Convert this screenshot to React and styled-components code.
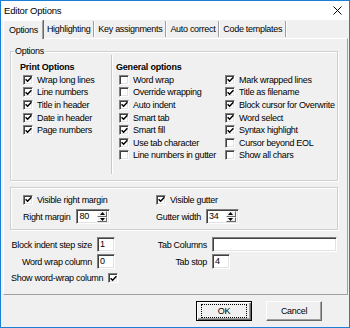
import React from 'react';
import styled, { createGlobalStyle, css } from 'styled-components';

const Global = createGlobalStyle`
  html, body { margin: 0; padding: 0; background: #fff; }
  body {
    font-family: "Liberation Sans", Arial, sans-serif;
    font-size: 9px;
    letter-spacing: -0.3px;
    color: #000;
  }
  * { box-sizing: border-box; }
`;

const Window = styled.div`
  width: 350px;
  height: 328px;
  border: 1px solid #1a7fd6;
  display: flex;
  flex-direction: column;
  background: #f0f0f0;
  overflow: hidden;
`;

const TitleBar = styled.div`
  height: 19px;
  flex: none;
  background: #fff;
  display: flex;
  align-items: center;
  justify-content: space-between;
  padding: 0 7px 0 3px;
  font-size: 9.5px;
  letter-spacing: -0.2px;
`;

const Body = styled.div`
  flex: 1;
  display: flex;
  flex-direction: column;
  padding: 0 1px 0 2px;
`;

const TabStrip = styled.div`
  height: 18px;
  display: flex;
  align-items: flex-end;
`;

const Tab = styled.div`
  position: relative;
  display: flex;
  align-items: center;
  ${p => p.$active ? css`
    height: 19px;
    margin-bottom: -1px;
    z-index: 1;
    padding: 0 4px 0 5px;
    background: #f0f0f0;
    border-left: 1px solid #fff;
    border-top: 1px solid #fff;
    border-right: 1px solid #a0a0a0;
    box-shadow: 1px 0 0 #696969;
    margin-right: 1px;
  ` : css`
    height: 16px;
    margin-bottom: 1px;
    padding: 0 3px 0 3px;
    border-right: 1px solid #a0a0a0;
    box-shadow: 1px 0 0 #fff;
    margin-right: 1px;
  `}
`;

const Panel = styled.div`
  height: 257px;
  flex: none;
  border: 1px solid;
  border-color: #fff #a0a0a0 #a0a0a0 #fff;
  padding: 12px 0 0 6px;
  display: flex;
  flex-direction: column;
`;

const Group = styled.div`
  position: relative;
  width: 328px;
  height: ${p => p.$h}px;
  margin-top: ${p => p.$mt || 0}px;
  border: 1px solid #d0d0d0;
  box-shadow: inset 1px 1px 0 #fff, 1px 1px 0 #fff;
  flex: none;
`;

const Legend = styled.span`
  position: absolute;
  top: -6px;
  left: 3px;
  padding: 0 1px;
  line-height: 11px;
  background: #f0f0f0;
`;

const OptionsInner = styled.div`
  display: flex;
  height: 100%;
`;

const PrintCol = styled.div`
  width: 100px;
  padding: 10px 0 0 9px;
`;

const Divider = styled.div`
  width: 2px;
  margin: 3px 0 6px;
  border-left: 1px solid #c8c8c8;
  border-right: 1px solid #fff;
`;

const GeneralCol = styled.div`
  flex: 1;
  padding: 10px 0 0 3px;
`;

const Heading = styled.div`
  font-weight: bold;
  height: 11.5px;
  line-height: 11.5px;
  letter-spacing: -0.2px;
`;

const CheckList = styled.div`
  display: grid;
  grid-template-columns: ${p => p.$cols || '1fr'};
  grid-auto-flow: column;
  grid-template-rows: repeat(${p => p.$rows}, 12.6px);
  padding-left: ${p => p.$indent}px;
`;

const CheckRow = styled.label`
  display: flex;
  align-items: center;
  gap: 4px;
  white-space: nowrap;
  height: ${p => p.$h || 12.6}px;
`;

const Box = styled.span`
  width: 10px;
  height: 10px;
  flex: none;
  background: #fff;
  border: 1px solid;
  border-color: #808080 #fff #fff #808080;
  box-shadow: inset 1px 1px 0 #404040, inset -1px -1px 0 #e3e3e3;
  display: flex;
  align-items: center;
  justify-content: center;
`;

const Check = ({ on }) => (
  <Box>
    {on && (
      <svg width="7" height="7" viewBox="0 0 7 7">
        <path d="M0.6 3.2 L2.6 5.2 L6.4 1.2" fill="none" stroke="#000" strokeWidth="1.5" />
      </svg>
    )}
  </Box>
);

const MarginGrid = styled.div`
  display: grid;
  grid-template-columns: 133px 1fr;
  grid-template-rows: 13px 15px;
  row-gap: 3px;
  padding: 5px 0 0 12px;
`;

const FieldRow = styled.div`
  display: flex;
  align-items: center;
  gap: ${p => p.$gap || 5}px;
`;

const Field = styled.div`
  width: ${p => p.$w}px;
  height: 15px;
  background: #fff;
  border: 1px solid;
  border-color: #808080 #fff #fff #808080;
  box-shadow: inset 1px 1px 0 #404040, inset -1px -1px 0 #e3e3e3;
  padding-left: 2px;
  display: flex;
  align-items: center;
  line-height: 1;
`;

const SpinWrap = styled(Field)`
  justify-content: space-between;
  padding-right: 2px;
`;

const SpinButtons = styled.div`
  width: 10px;
  height: 11px;
  display: flex;
  flex-direction: column;
`;

const SpinBtn = styled.div`
  flex: 1;
  background: #f0f0f0;
  border: 1px solid;
  border-color: #fff #696969 #696969 #fff;
  display: flex;
  align-items: center;
  justify-content: center;
`;

const Arrow = ({ up }) => (
  <svg width="5" height="3" viewBox="0 0 5 3">
    <path d={up ? 'M0 3 L2.5 0 L5 3 Z' : 'M0 0 L2.5 3 L5 0 Z'} fill="#000" />
  </svg>
);

const Spin = ({ value, w }) => (
  <SpinWrap $w={w}>
    <span>{value}</span>
    <SpinButtons>
      <SpinBtn><Arrow up /></SpinBtn>
      <SpinBtn><Arrow /></SpinBtn>
    </SpinButtons>
  </SpinWrap>
);

const BottomGrid = styled.div`
  display: grid;
  grid-template-columns: 81px 18px 87px 125px;
  grid-template-rows: 15px 15px 14px;
  column-gap: 5px;
  row-gap: 2px;
  margin: 7px 0 0 1px;
  align-items: center;
`;

const RLabel = styled.span`
  text-align: right;
  white-space: nowrap;
`;

const SpanRow = styled.div`
  grid-column: 1 / span 2;
  display: flex;
  align-items: center;
  gap: 5px;
  white-space: nowrap;
`;

const ButtonRow = styled.div`
  display: flex;
  justify-content: flex-end;
  gap: 14px;
  padding: 6px 26px 0 0;
`;

const Button = styled.div`
  width: 56px;
  height: 20px;
  display: flex;
  align-items: center;
  justify-content: center;
  background: #f0f0f0;
  border: 1px solid;
  border-color: #fff #696969 #696969 #fff;
  box-shadow: inset -1px -1px 0 #a0a0a0;
  ${p => p.$default && css`
    border: 1px solid #000;
    box-shadow: inset 1px 1px 0 #fff, inset -1px -1px 0 #696969, inset -2px -2px 0 #a0a0a0;
  `}
`;

const Focus = styled.span`
  display: flex;
  align-items: center;
  justify-content: center;
  width: 46px;
  height: 14px;
  border: 1px dotted #000;
`;

export default function App() {
  return (
    <>
      <Global />
      <Window>
        <TitleBar>
          <span>Editor Options</span>
          <svg width="9" height="9" viewBox="0 0 9 9">
            <path d="M0.5 0.5 L8.5 8.5 M8.5 0.5 L0.5 8.5" stroke="#000" strokeWidth="1" />
          </svg>
        </TitleBar>
        <Body>
          <TabStrip>
            <Tab $active>Options</Tab>
            <Tab>Highlighting</Tab>
            <Tab>Key assignments</Tab>
            <Tab>Auto correct</Tab>
            <Tab>Code templates</Tab>
          </TabStrip>
          <Panel>
            <Group $h={130}>
              <Legend>Options</Legend>
              <OptionsInner>
                <PrintCol>
                  <Heading>Print Options</Heading>
                  <CheckList $rows={5} $indent={3}>
                    {['Wrap long lines', 'Line numbers', 'Title in header', 'Date in header', 'Page numbers'].map(t => (
                      <CheckRow key={t}><Check on />{t}</CheckRow>
                    ))}
                  </CheckList>
                </PrintCol>
                <Divider />
                <GeneralCol>
                  <Heading>General options</Heading>
                  <CheckList $rows={7} $cols="106px 1fr" $indent={3}>
                    {[
                      ['Word wrap', false], ['Override wrapping', false], ['Auto indent', true],
                      ['Smart tab', true], ['Smart fill', true], ['Use tab character', true],
                      ['Line numbers in gutter', false],
                      ['Mark wrapped lines', true], ['Title as filename', true],
                      ['Block cursor for Overwrite', true], ['Word select', true],
                      ['Syntax highlight', true], ['Cursor beyond EOL', false], ['Show all chars', false],
                    ].map(([t, on]) => (
                      <CheckRow key={t}><Check on={on} />{t}</CheckRow>
                    ))}
                  </CheckList>
                </GeneralCol>
              </OptionsInner>
            </Group>
            <Group $h={43} $mt={6}>
              <MarginGrid>
                <CheckRow $h={13}><Check on />Visible right margin</CheckRow>
                <CheckRow $h={13}><Check on />Visible gutter</CheckRow>
                <FieldRow $gap={6}>Right margin<Spin value="80" w={34} /></FieldRow>
                <FieldRow $gap={5}>Gutter width<Spin value="34" w={33} /></FieldRow>
              </MarginGrid>
            </Group>
            <BottomGrid>
              <RLabel>Block indent step size</RLabel>
              <Field $w={18}>1</Field>
              <RLabel>Tab Columns</RLabel>
              <Field $w={125} />
              <RLabel>Word wrap column</RLabel>
              <Field $w={18}>0</Field>
              <RLabel>Tab stop</RLabel>
              <Field $w={18}>4</Field>
              <SpanRow>Show word-wrap column<Check on /></SpanRow>
            </BottomGrid>
          </Panel>
          <ButtonRow>
            <Button $default><Focus>OK</Focus></Button>
            <Button>Cancel</Button>
          </ButtonRow>
        </Body>
      </Window>
    </>
  );
}
